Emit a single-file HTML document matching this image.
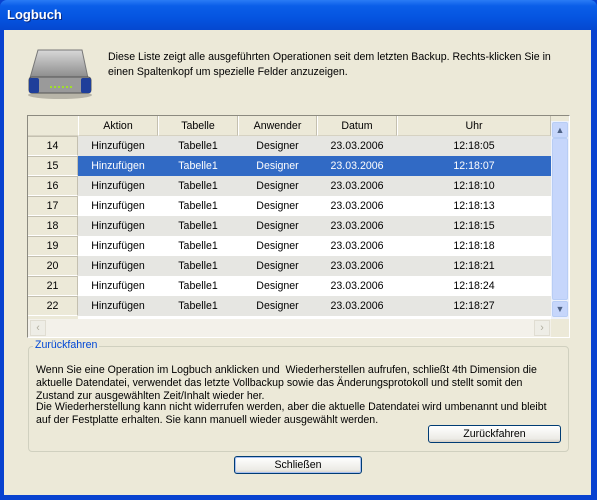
<!DOCTYPE html>
<html><head><style>
*{margin:0;padding:0;box-sizing:border-box}
body{width:597px;height:500px;overflow:hidden;background:#0842d0;font-family:Tahoma,"Liberation Sans",sans-serif;font-size:10.6px;color:#000;position:relative}
.title{position:absolute;left:0;top:0;width:597px;height:30px;background:linear-gradient(#2a7cf5 0%,#0a5ee8 20%,#0554e0 60%,#0548d0 100%);border-radius:7px 7px 0 0}
.title span{position:absolute;left:7px;top:7px;color:#fff;font-weight:bold;font-size:13px;text-shadow:1px 1px #0a2a80}
.client{position:absolute;left:4px;top:30px;width:587px;height:465px;background:#ECE9D8}
.a{position:absolute}
.tbl{position:absolute;left:27px;top:115px;width:543px;height:223px;border:1px solid #7f9db9;border-color:#8c8a80 #fff #fff #8c8a80;background:#fff;overflow:hidden}
.hdr{position:absolute;top:0;height:20px;background:#ECE9D8;border-bottom:1px solid #d6d2c2;text-align:center;line-height:20px}
.h{border-left:1px solid #fff;border-right:1px solid #c4c0b0}
.row{position:absolute;left:0;height:20px;width:523px;line-height:20px}
.row div{position:absolute;top:0;height:20px;text-align:center}
.row div.num{left:0;width:50px;background:#ECE9D8;border-bottom:1px solid #fff;border-top:1px solid #c4c0b0;border-right:1px solid #c4c0b0;line-height:18px}
.g{background:#e6e6e2}.w{background:#fff}.s{background:#316AC5;color:#fff}
.btn{position:absolute;height:18px;border:1px solid #003c74;border-radius:3px;background:linear-gradient(#fff,#ecebe6 80%,#d6d0c5);text-align:center;line-height:16px}
.nw{white-space:nowrap}
</style></head><body>
<div class="title"><span>Logbuch</span></div>
<div class="client"></div>
<svg class="a" style="left:26px;top:48px" width="68" height="52" viewBox="0 0 68 52">
<defs><linearGradient id="tp" x1="0" y1="0" x2="0" y2="1"><stop offset="0" stop-color="#d8d8d8"/><stop offset="1" stop-color="#8a8a8a"/></linearGradient></defs>
<ellipse cx="34" cy="47" rx="32" ry="4" fill="#b8b5a8"/>
<path d="M12 2 L56 2 L62 30 L4 30 Z" fill="url(#tp)" stroke="#777"/>
<rect x="3" y="29" width="62" height="16" rx="3" fill="#9a9a9a" stroke="#555"/>
<rect x="3" y="30" width="10" height="15" rx="2" fill="#1f3f9a"/>
<rect x="55" y="30" width="10" height="15" rx="2" fill="#1f3f9a"/>
<g fill="#9fe02a"><rect x="24" y="38" width="2" height="2"/><rect x="28" y="38" width="2" height="2"/><rect x="32" y="38" width="2" height="2"/><rect x="36" y="38" width="2" height="2"/><rect x="40" y="38" width="2" height="2"/><rect x="44" y="38" width="2" height="2"/></g>
</svg>
<div class="a nw" style="left:108px;top:50px;line-height:15px">Diese Liste zeigt alle ausgeführten Operationen seit dem letzten Backup. Rechts-klicken Sie in<br>einen Spaltenkopf um spezielle Felder anzuzeigen.</div>
<div class="tbl">
<div class="hdr" style="left:0;width:50px"></div>
<div class="hdr h" style="left:50px;width:80px">Aktion</div>
<div class="hdr h" style="left:130px;width:80px">Tabelle</div>
<div class="hdr h" style="left:210px;width:79px">Anwender</div>
<div class="hdr h" style="left:289px;width:80px">Datum</div>
<div class="hdr h" style="left:369px;width:154px">Uhr</div>
<div class="hdr" style="left:523px;width:20px"></div>
<div id="rows"></div>
<div class="a" style="left:0;top:200px;width:50px;height:3px;background:#ECE9D8"></div>
<div class="a" style="left:0;top:203px;width:523px;height:18px;background:#f3f1ea"></div>
<div class="a" style="left:2px;top:204px;width:16px;height:16px;border:1px solid #e0ddd2;background:#eeede6;color:#b0ad9f;text-align:center;line-height:14px">&lsaquo;</div>
<div class="a" style="left:506px;top:204px;width:16px;height:16px;border:1px solid #e0ddd2;background:#eeede6;color:#b0ad9f;text-align:center;line-height:14px">&rsaquo;</div>
<div class="a" style="left:523px;top:5px;width:18px;height:198px;background:#eef2fb"></div>
<div class="a" style="left:524px;top:6px;width:16px;height:16px;border:1px solid #b8cdf5;border-radius:2px;background:#c6d6fb;color:#4d6185;text-align:center;line-height:14px;font-size:9px">&#9650;</div>
<div class="a" style="left:524px;top:22px;width:16px;height:162px;border:1px solid #b8cdf5;border-radius:2px;background:#c6d6fb"></div>
<div class="a" style="left:524px;top:185px;width:16px;height:16px;border:1px solid #b8cdf5;border-radius:2px;background:#c6d6fb;color:#4d6185;text-align:center;line-height:14px;font-size:9px">&#9660;</div>
<div class="a" style="left:523px;top:203px;width:20px;height:20px;background:#ECE9D8"></div>
</div>
<div class="a" style="left:28px;top:346px;width:541px;height:106px;border:1px solid #d0d0bf;border-radius:4px"></div>
<div class="a" style="left:33px;top:339px;padding:0 2px;background:#ECE9D8;color:#0046d5">Zurückfahren</div>
<div class="a nw" style="left:36px;top:364px;line-height:13px">Wenn Sie eine Operation im Logbuch anklicken und&nbsp; Wiederherstellen aufrufen, schließt 4th Dimension die<br>aktuelle Datendatei, verwendet das letzte Vollbackup sowie das Änderungsprotokoll und stellt somit den<br>Zustand zur ausgewählten Zeit/Inhalt wieder her.</div>
<div class="a nw" style="left:36px;top:401px;line-height:13px">Die Wiederherstellung kann nicht widerrufen werden, aber die aktuelle Datendatei wird umbenannt und bleibt<br>auf der Festplatte erhalten. Sie kann manuell wieder ausgewählt werden.</div>
<div class="btn" style="left:428px;top:425px;width:133px">Zurückfahren</div>
<div class="btn" style="left:234px;top:456px;width:128px;border-color:#003c74;box-shadow:inset 0 0 0 1px #a8c0f0">Schließen</div>
<script>
var d=[[14,'g','05'],[15,'s','07'],[16,'g','10'],[17,'w','13'],[18,'g','15'],[19,'w','18'],[20,'g','21'],[21,'w','24'],[22,'g','27']];
var h='';d.forEach(function(r,i){var c=r[1]=='s'?'color:#fff;':'';h+='<div class="row" style="top:'+(20+i*20)+'px"><div class="num">'+r[0]+'</div><div class="'+r[1]+'" style="left:50px;width:473px"></div><div style="'+c+'left:50px;width:80px">Hinzufügen</div><div style="'+c+'left:130px;width:80px">Tabelle1</div><div style="'+c+'left:210px;width:79px">Designer</div><div style="'+c+'left:289px;width:80px">23.03.2006</div><div style="'+c+'left:369px;width:154px">12:18:'+r[2]+'</div></div>';});
document.getElementById('rows').innerHTML=h;
</script>
</body></html>
